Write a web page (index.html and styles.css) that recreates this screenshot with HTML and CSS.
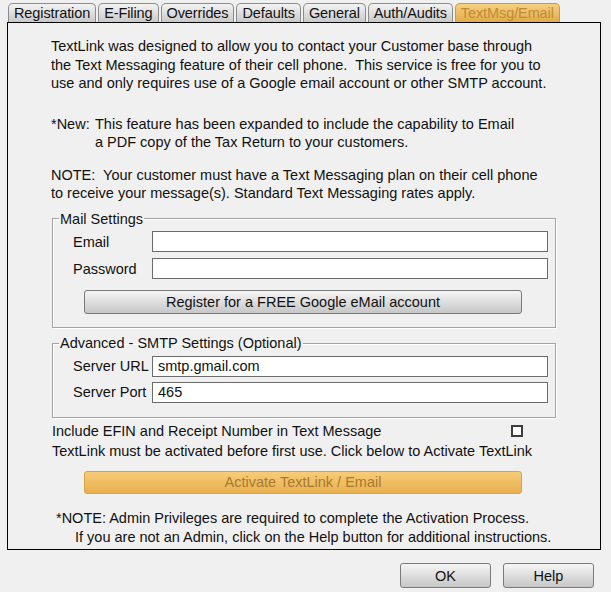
FILE: index.html
```html
<!DOCTYPE html>
<html lang="en">
<head>
    <meta charset="UTF-8">
    <title>TextMsg/Email</title>
    <link rel="stylesheet" href="styles.css">
</head>
<body>
    <div class="tabs">
        <div class="tab">Registration</div>
        <div class="tab">E-Filing</div>
        <div class="tab">Overrides</div>
        <div class="tab">Defaults</div>
        <div class="tab">General</div>
        <div class="tab">Auth/Audits</div>
        <div class="tab active">TextMsg/Email</div>
    </div>

    <div class="panel">
        <p class="intro">TextLink was designed to allow you to contact your Customer base through<br>
            the Text Messaging feature of their cell phone.&nbsp; This service is free for you to<br>
            use and only requires use of a Google email account or other SMTP account.</p>

        <p class="new"><span class="new-label">*New:</span><span>This feature has been expanded to include the capability to Email<br>
            a PDF copy of the Tax Return to your customers.</span></p>

        <p class="note">NOTE:&nbsp; Your customer must have a Text Messaging plan on their cell phone<br>
            to receive your message(s). Standard Text Messaging rates apply.</p>

        <fieldset class="group mail">
            <legend>Mail Settings</legend>
            <div class="fields">
                <label for="email">Email</label>
                <input type="text" id="email">
                <label for="password">Password</label>
                <input type="password" id="password">
            </div>
            <button class="btn wide">Register for a FREE Google eMail account</button>
        </fieldset>

        <fieldset class="group smtp">
            <legend>Advanced - SMTP Settings (Optional)</legend>
            <div class="fields">
                <label for="server-url">Server URL</label>
                <input type="text" id="server-url" value="smtp.gmail.com">
                <label for="server-port">Server Port</label>
                <input type="text" id="server-port" value="465">
            </div>
        </fieldset>

        <div class="check-row">
            <span>Include EFIN and Receipt Number in Text Message</span>
            <span class="checkbox"></span>
        </div>
        <p class="activate-hint">TextLink must be activated before first use. Click below to Activate TextLink</p>

        <button class="btn wide gold">Activate TextLink / Email</button>

        <p class="admin-note">*NOTE: Admin Privileges are required to complete the Activation Process.<br>
            <span class="indent">If you are not an Admin, click on the Help button for additional instructions.</span></p>
    </div>

    <div class="actions">
        <button class="btn small">OK</button>
        <button class="btn small">Help</button>
    </div>
</body>
</html>
```

FILE: styles.css
```css
body {
    margin: 0;
    background-color: #f0f0f0;
    font-family: "Liberation Sans", Arial, sans-serif;
    font-size: 14.5px;
    color: #111;
}

p {
    margin: 0;
    line-height: 18.5px;
    white-space: nowrap;
}

/* Tab strip */
.tabs {
    display: flex;
    gap: 2px;
    padding: 3px 0 0 8px;
}

.tab {
    height: 19px;
    line-height: 19px;
    padding: 0 5px;
    border: 1px solid #8c8c8c;
    border-bottom: none;
    border-radius: 5px 5px 0 0;
    background: linear-gradient(#f4f4f4, #c9c9c9);
    box-sizing: border-box;
    letter-spacing: -0.1px;
}

.tab.active {
    background: linear-gradient(#f5cf80, #e4ab49);
    border-color: #c99a44;
    color: #bf8b37;
}

/* Main panel */
.panel {
    margin-left: 7px;
    width: 594px;
    height: 528px;
    box-sizing: border-box;
    border: 1px solid #000;
    padding: 14px 44px 0 43px;
}

.new {
    display: flex;
    margin-top: 22px;
}

.new-label {
    flex: 0 0 44px;
}

.note {
    margin-top: 14px;
}

/* Group boxes */
.group {
    margin: 7px 0 0 1px;
    padding: 0 7px 13px 6px;
    border: 1px solid #a3a3a3;
    box-shadow: 1px 1px 0 #fff, inset 1px 1px 0 #fff;
}

.group legend {
    padding: 0 1px;
    line-height: 18.5px;
}

.fields {
    display: grid;
    grid-template-columns: 79px 1fr;
    row-gap: 6px;
    align-items: center;
    margin-top: 3px;
    padding-left: 14px;
    white-space: nowrap;
}

.fields input {
    height: 21px;
    box-sizing: border-box;
    border: 1px solid #6b6b6b;
    background: #fff;
    padding: 0 5px;
    font-family: inherit;
    font-size: 14.5px;
    color: #111;
    outline: none;
}

.smtp {
    margin-top: 6px;
    padding-bottom: 14px;
}

.smtp .fields {
    row-gap: 5px;
}

/* Buttons */
.btn {
    font-family: inherit;
    font-size: 14.5px;
    color: #111;
    border: 1px solid #7a7a7a;
    border-radius: 3px;
    background: linear-gradient(#f6f6f6, #c6c6c6);
    padding: 0;
    cursor: pointer;
}

.btn.wide {
    display: block;
    width: 438px;
    height: 24px;
}

.mail .btn.wide {
    margin: 11px 0 0 25px;
}

.btn.gold {
    margin: 10px 0 0 33px;
    height: 23px;
    border-color: #d9a441;
    background: linear-gradient(#f7cc78, #e8b04e);
    color: #a8792f;
}

.check-row {
    display: flex;
    align-items: center;
    justify-content: space-between;
    margin: 4px 33px 0 1px;
    line-height: 18.5px;
}

.checkbox {
    width: 12px;
    height: 12px;
    border: 2px solid #3c3c3c;
    background: #fff;
    box-sizing: border-box;
    margin-top: 1px;
}

.activate-hint {
    margin: 2px 0 0 1px;
}

.admin-note {
    margin: 15px 0 0 5px;
    line-height: 19px;
}

.admin-note .indent {
    padding-left: 19px;
}

/* Bottom buttons */
.actions {
    display: flex;
    justify-content: flex-end;
    gap: 12px;
    padding: 13px 17px 0 0;
}

.btn.small {
    width: 91px;
    height: 25px;
}
```
